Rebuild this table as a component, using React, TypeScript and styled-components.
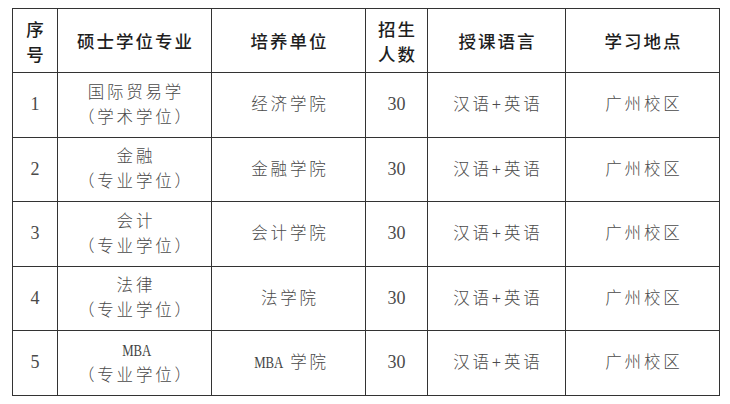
import React from "react";
import styled, { createGlobalStyle } from "styled-components";

const GlobalStyle = createGlobalStyle`
  html, body { margin: 0; padding: 0; background: #ffffff; }
  body { font-family: "Liberation Serif", "Noto Sans CJK SC", serif; }
`;

const Page = styled.div`
  width: 730px;
  height: 404px;
  padding: 8px 0 0 12px;
  box-sizing: border-box;
  background: #fff;
`;

const Table = styled.table`
  border-collapse: collapse;
  table-layout: fixed;
  width: 707px;
  border: 1.5px solid #555;
`;

const HeadCell = styled.th`
  border: 1px solid #333;
  height: 63px;
  padding: 0;
  text-align: center;
  vertical-align: middle;
  font-family: "Noto Sans CJK SC", sans-serif;
  font-weight: 500;
  font-size: 17.5px;
  line-height: 25px;
  letter-spacing: 2px;
  color: #1e1e1e;
  text-indent: 2px;
`;

const Cell = styled.td<{ $serif?: boolean }>`
  border: 1px solid #333;
  height: 63.5px;
  padding: 0;
  text-align: center;
  vertical-align: middle;
  font-family: "Liberation Serif", "Noto Sans CJK SC", serif;
  font-weight: 300;
  font-size: ${(p) => (p.$serif ? "18px" : "16.5px")};
  line-height: 25px;
  letter-spacing: ${(p) => (p.$serif ? "0" : "2.8px")};
  text-indent: ${(p) => (p.$serif ? "0" : "2.8px")};
  color: #4a4a4a;
`;

const Line = styled.div``;

const Latin = styled.span`
  display: inline-block;
  font-family: "Liberation Serif", serif;
  font-size: 16px;
  letter-spacing: 0;
  font-weight: 400;
  color: #444;
  transform: scaleX(0.8);
  margin: 0 -3.5px;
`;

type Row = {
  no: string;
  major: React.ReactNode;
  kind: string;
  unit: React.ReactNode;
};

const rows: Row[] = [
  { no: "1", major: "国际贸易学", kind: "（学术学位）", unit: "经济学院" },
  { no: "2", major: "金融", kind: "（专业学位）", unit: "金融学院" },
  { no: "3", major: "会计", kind: "（专业学位）", unit: "会计学院" },
  { no: "4", major: "法律", kind: "（专业学位）", unit: "法学院" },
  {
    no: "5",
    major: <Latin>MBA</Latin>,
    kind: "（专业学位）",
    unit: (
      <>
        <Latin>MBA</Latin> 学院
      </>
    ),
  },
];

export default function App() {
  return (
    <>
      <GlobalStyle />
      <Page>
        <Table>
          <colgroup>
            <col style={{ width: 45 }} />
            <col style={{ width: 154 }} />
            <col style={{ width: 154 }} />
            <col style={{ width: 62 }} />
            <col style={{ width: 138 }} />
            <col style={{ width: 154 }} />
          </colgroup>
          <thead>
            <tr>
              <HeadCell>
                <Line>序</Line>
                <Line>号</Line>
              </HeadCell>
              <HeadCell>硕士学位专业</HeadCell>
              <HeadCell>培养单位</HeadCell>
              <HeadCell>
                <Line>招生</Line>
                <Line>人数</Line>
              </HeadCell>
              <HeadCell>授课语言</HeadCell>
              <HeadCell>学习地点</HeadCell>
            </tr>
          </thead>
          <tbody>
            {rows.map((r) => (
              <tr key={r.no}>
                <Cell $serif>{r.no}</Cell>
                <Cell>
                  <Line>{r.major}</Line>
                  <Line>{r.kind}</Line>
                </Cell>
                <Cell>{r.unit}</Cell>
                <Cell $serif>30</Cell>
                <Cell>汉语+英语</Cell>
                <Cell>广州校区</Cell>
              </tr>
            ))}
          </tbody>
        </Table>
      </Page>
    </>
  );
}
